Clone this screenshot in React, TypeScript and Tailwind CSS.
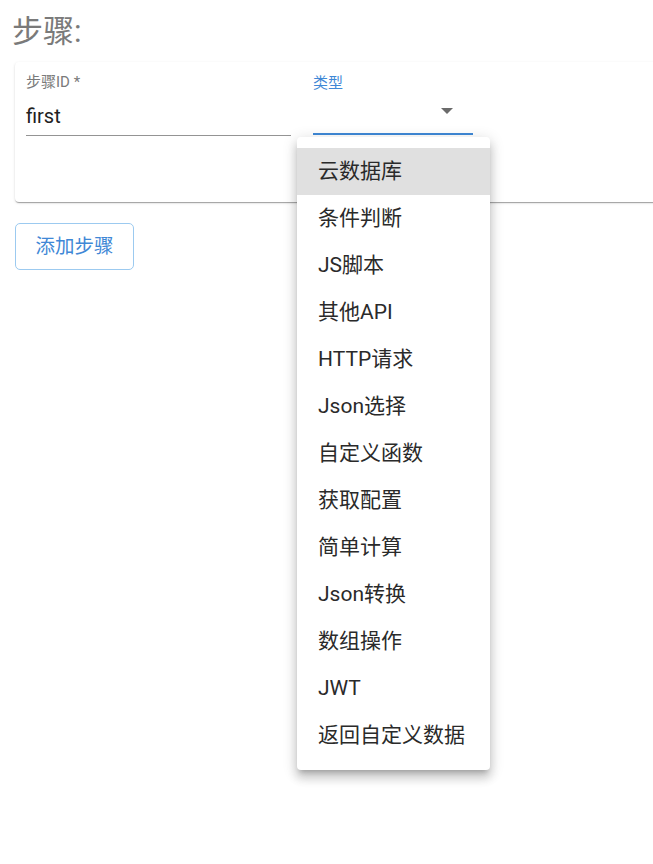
import React from "react";

const FONT = { fontFamily: 'Roboto, "Noto Sans CJK SC", "Noto Sans", sans-serif' };

const OPTIONS = [
  "云数据库",
  "条件判断",
  "JS脚本",
  "其他API",
  "HTTP请求",
  "Json选择",
  "自定义函数",
  "获取配置",
  "简单计算",
  "Json转换",
  "数组操作",
  "JWT",
  "返回自定义数据",
];

function TypeMenu() {
  return (
    <div className="absolute left-[297px] top-[137px] w-[193px] rounded-[4px] bg-white py-[11px] shadow-[0_5px_5px_-3px_rgba(0,0,0,0.2),0_8px_10px_1px_rgba(0,0,0,0.14),0_3px_14px_2px_rgba(0,0,0,0.12)]">
      {OPTIONS.map((opt, i) => (
        <div
          key={opt}
          className={
            "flex h-[47px] items-center px-[21px] text-[21px] text-[#2a2a2a] " +
            (i === 0 ? "bg-[#e0e0e0]" : "")
          }
        >
          {opt}
        </div>
      ))}
    </div>
  );
}

export default function App() {
  return (
    <div className="relative h-[864px] w-[653px] overflow-hidden bg-white" style={FONT}>
      {/* heading */}
      <div className="pl-[12px] pt-[12px] text-[31px] leading-[40px] text-[#7a7a7a]">步骤:</div>

      {/* step card, runs past the right edge */}
      <div className="ml-[15px] mt-[10px] h-[140px] w-[700px] rounded-[4px] bg-white shadow-[0_2px_1px_-1px_rgba(0,0,0,0.2),0_1px_1px_0_rgba(0,0,0,0.14),0_1px_3px_0_rgba(0,0,0,0.12)]">
        <div className="flex gap-[22px] pl-[11px] pt-[12px]">
          <div className="w-[265px]">
            <div className="h-[17px] text-[15px] leading-[17px] text-[#7a7a7a]">步骤ID *</div>
            <div className="h-[45px] border-b border-[#949494] pt-[12px] text-[20px] leading-[26px] text-[#212121]">
              first
            </div>
          </div>
          <div className="w-[160px]">
            <div className="h-[17px] pt-[1px] text-[15px] leading-[17px] text-[#3f88d6]">类型</div>
            <div className="relative h-[44px] border-b-2 border-[#3f88d6]">
              <svg
                className="absolute right-[20px] top-[17px]"
                width="12"
                height="6"
                viewBox="0 0 12 6"
              >
                <path d="M0 0h12L6 6z" fill="#6b6b6b" />
              </svg>
            </div>
          </div>
        </div>
      </div>

      {/* add step button */}
      <button className="ml-[15px] mt-[21px] h-[47px] w-[119px] rounded-[5px] border border-[#9ccaf0] text-[19.5px] text-[#3f88d6]">
        添加步骤
      </button>

      <TypeMenu />
    </div>
  );
}
